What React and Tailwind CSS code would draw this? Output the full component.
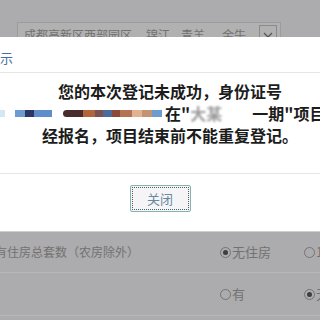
import React from 'react';

const blocks = [
  { w: 5, c: 'bg-[#d3e8f2]' },
  { w: 10, c: 'bg-transparent' },
  { w: 10, c: 'bg-[#6c9bd2]' },
  { w: 9, c: 'bg-[#2b3762]' },
  { w: 18, c: 'bg-[#5d8dcb]' },
  { w: 11, c: 'bg-transparent' },
  { w: 20, c: 'bg-[#4a2b2b] rounded-l-full' },
  { w: 12, c: 'bg-[#b0663a]' },
  { w: 8, c: 'bg-[#7b5252]' },
  { w: 9, c: 'bg-[#4b6b9b]' },
  { w: 8, c: 'bg-[#8b4b3b]' },
  { w: 12, c: 'bg-[#b47454]' },
  { w: 10, c: 'bg-[#e2b392]' },
  { w: 10, c: 'bg-[#c39373]' },
  { w: 10, c: 'bg-[#6c9bd2]' },
];

const Radio = ({ checked }) => (
  <span className="w-[11px] h-[11px] rounded-full border border-[#747474] flex items-center justify-center shrink-0">
    {checked && <span className="w-[5px] h-[5px] rounded-full bg-[#3e3e3e]" />}
  </span>
);

const App = () => {
  return (
    <div className="w-[320px] h-[320px] overflow-hidden bg-[#acabad] flex flex-col font-['Noto_Sans_CJK_SC',sans-serif]">
      {/* page behind overlay */}
      <div className="h-[37px] shrink-0 overflow-hidden pt-[22px] pl-[17px]">
        <div className="w-[264px] h-[26px] border border-[#9c9c9c] bg-[#b1b1b1] flex items-center pl-[6px] text-[12px] text-[#727272] whitespace-nowrap">
          <span>成都高新区西部园区</span>
          <span className="ml-[14px]">锦江</span>
          <span className="ml-[11px]">青羊</span>
          <span className="ml-[17px]">金牛</span>
          <span className="ml-auto mr-[3px] w-[18px] h-[20px] border border-[#8a8a8a] flex items-center justify-center">
            <svg width="10" height="6" viewBox="0 0 10 6"><path d="M1 1l4 4 4-4" fill="none" stroke="#555" strokeWidth="1.3" /></svg>
          </span>
        </div>
      </div>

      {/* dialog */}
      <div className="h-[194px] shrink-0 bg-white flex flex-col">
        <div className="h-[36px] border-b border-[#e6e6e6] pt-[13px] pl-0 overflow-hidden">
          <div className="ml-[-13px] text-[13px] leading-[16px] text-[#3f6fa6] whitespace-nowrap">提示</div>
        </div>
        <div className="h-[101px] border-b border-[#e6e6e6] pt-[7px] text-[16px] leading-[22px] font-bold text-[#1c1c1c] overflow-hidden">
          <div className="text-center pl-[20px] whitespace-nowrap">您的本次登记未成功，身份证号</div>
          <div className="flex items-center whitespace-nowrap h-[22px]">
            {blocks.map((b, i) => (
              <span key={i} className={`h-[7px] shrink-0 ${b.c}`} style={{ width: b.w }} />
            ))}
            <span className="ml-[3px]">在"</span>
            <span className="text-[#9a9a9a] blur-[1px]">大某</span>
            <span className="w-[30px] h-[14px] bg-white shrink-0" />
            <span>一期"项目</span>
          </div>
          <div className="text-center pl-[20px] whitespace-nowrap">经报名，项目结束前不能重复登记。</div>
        </div>
        <div className="flex-1 flex justify-center pt-[11px]">
          <button className="w-[61px] h-[27px] border border-[#82b5b1] rounded-[2px] bg-[#f5f5f7] outline-dotted outline-1 outline-offset-[-3px] outline-[#5a5a5a] text-[13px] text-[#6a86a0] flex items-center justify-center">
            关闭
          </button>
        </div>
      </div>

      {/* rows under overlay */}
      <div className="h-[1px] bg-[#cfcfcf] shrink-0" />
      <div className="h-[41px] shrink-0 border-b border-[#b8b8b8] flex items-center text-[13px] text-[#727272] whitespace-nowrap overflow-hidden">
        <span className="ml-[-5px] w-[225px] shrink-0 text-[12px]">有住房总套数（农房除外）</span>
        <span className="flex items-center gap-[1px] w-[84px] shrink-0"><Radio checked /><span>无住房</span></span>
        <span className="flex items-center gap-[1px]"><Radio /><span>1套</span></span>
      </div>
      <div className="h-[43px] shrink-0 border-b border-[#b8b8b8] flex items-center text-[13px] text-[#727272] whitespace-nowrap overflow-hidden">
        <span className="w-[220px] shrink-0" />
        <span className="flex items-center gap-[1px] w-[84px] shrink-0"><Radio /><span>有</span></span>
        <span className="flex items-center gap-[1px]"><Radio checked /><span>无</span></span>
      </div>
    </div>
  );
};

export default App;
